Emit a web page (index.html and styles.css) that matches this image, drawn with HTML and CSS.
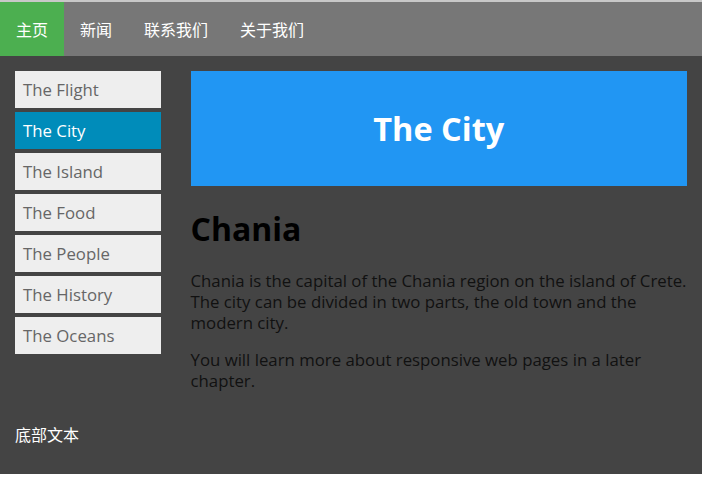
FILE: index.html
```html
<!DOCTYPE html>
<html lang="zh">
<head>
<meta charset="utf-8">
<title>The City</title>
<link rel="stylesheet" href="styles.css">
</head>
<body>
<div class="page">
  <nav class="topnav">
    <a class="nav-item active" href="#">主页</a>
    <a class="nav-item" href="#">新闻</a>
    <a class="nav-item" href="#">联系我们</a>
    <a class="nav-item" href="#">关于我们</a>
  </nav>
  <div class="row">
    <aside class="col-side">
      <ul class="menu">
        <li>The Flight</li>
        <li class="current">The City</li>
        <li>The Island</li>
        <li>The Food</li>
        <li>The People</li>
        <li>The History</li>
        <li>The Oceans</li>
      </ul>
    </aside>
    <main class="col-main">
      <div class="header"><h1>The City</h1></div>
      <h1 class="title">Chania</h1>
      <p>Chania is the capital of the Chania region on the island of Crete. The city can be divided in two parts, the old town and the modern city.</p>
      <p>You will learn more about responsive web pages in a later chapter.</p>
    </main>
  </div>
  <footer class="footer">底部文本</footer>
</div>
</body>
</html>
```
FILE: styles.css
```css
* { box-sizing: border-box; }
html, body { margin: 0; padding: 0; background: #fff; }
body {
  font-family: "Open Sans", "Noto Sans CJK SC", sans-serif;
  font-size: 16px;
}
.page {
  height: 474px;
  background: #444;
  border-top: 2px solid #c8c8c8;
  display: flex;
  flex-direction: column;
}
.topnav {
  display: flex;
  height: 54px;
  background: #777;
}
.nav-item {
  display: flex;
  align-items: center;
  padding: 0 16px;
  color: #fff;
  text-decoration: none;
  font-family: "Noto Sans CJK SC", sans-serif;
  font-size: 16px;
}
.nav-item.active { background: #4caf50; }
.row { display: flex; }
.col-side { width: 25%; padding: 15px; }
.col-main { width: 75%; padding: 15px; }
.menu { list-style: none; margin: 0; padding: 0; }
.menu li {
  height: 37px;
  margin-bottom: 4px;
  padding: 0 8px;
  display: flex;
  align-items: center;
  background: #eee;
  color: #666;
  font-size: 16.8px;
}
.menu li.current { background: #008cba; color: #fff; }
.header {
  background: #2196f3;
  color: #fff;
  text-align: center;
  height: 115px;
  display: flex;
  align-items: center;
  justify-content: center;
}
.header h1 { margin: 0; font-size: 32.5px; font-weight: 700; }
.title { margin: 21px 0 20px; font-size: 32px; font-weight: 700; color: #000; }
.col-main p { margin: 0 0 16px; color: #111; font-size: 16.8px; line-height: 21px; }
.footer {
  padding: 0 15px;
  color: #fff;
  font-family: "Noto Sans CJK SC", sans-serif;
  font-size: 16px;
}
```
